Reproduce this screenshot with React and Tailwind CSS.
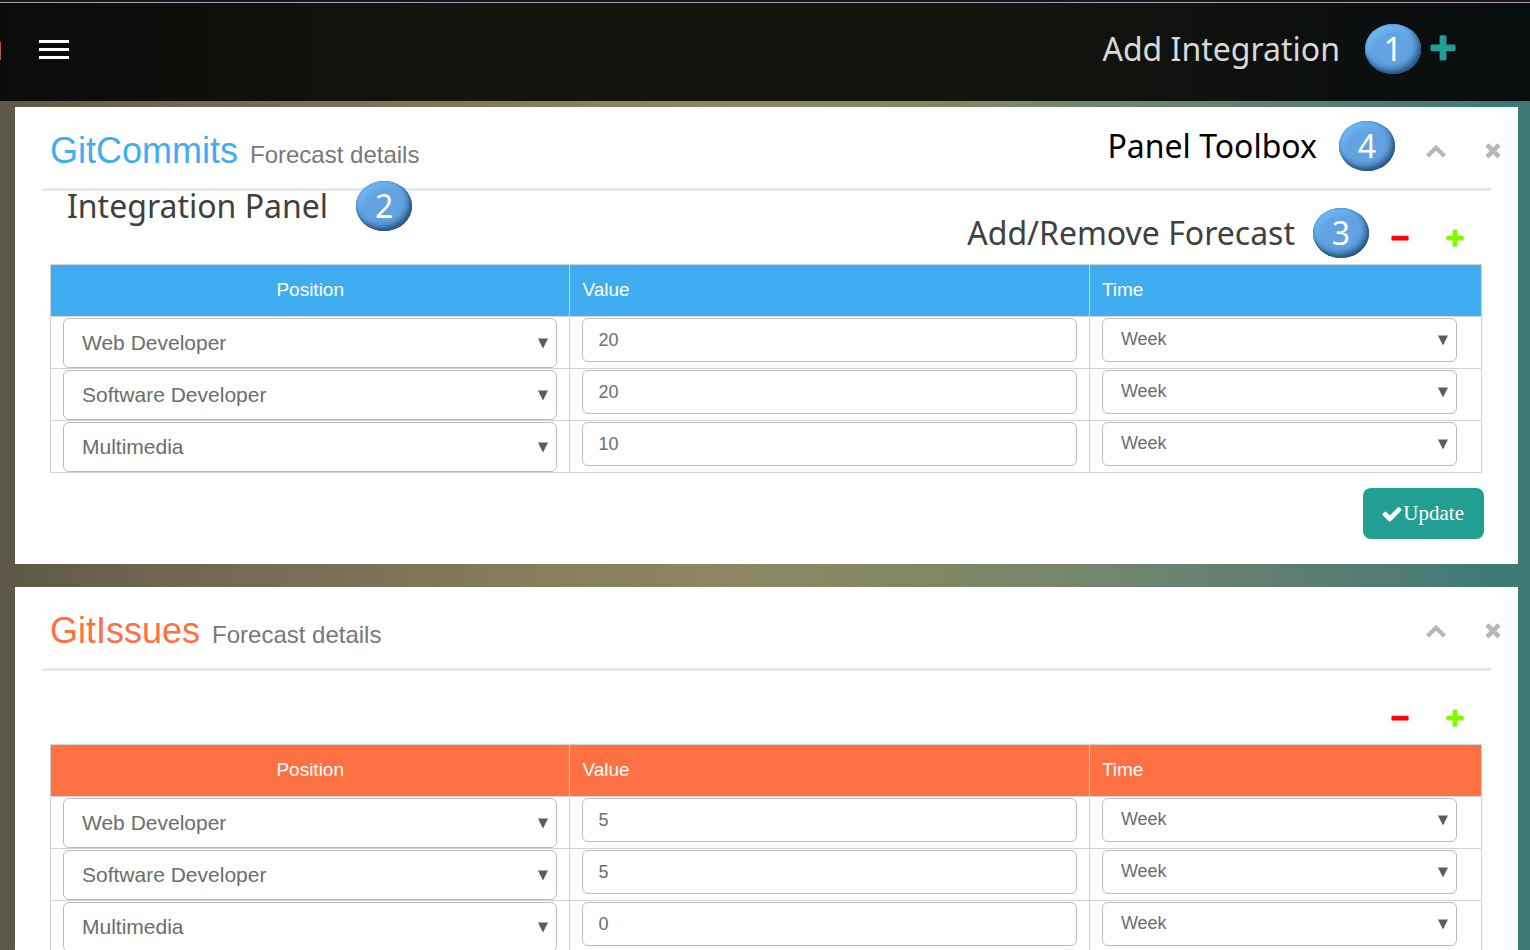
import React from "react";

const PLUS =
  "M1600 736v192q0 40-28 68t-68 28h-416v416q0 40-28 68t-68 28h-192q-40 0-68-28t-28-68v-416h-416q-40 0-68-28t-28-68v-192q0-40 28-68t68-28h416v-416q0-40 28-68t68-28h192q40 0 68 28t28 68v416h416q40 0 68 28t28 68z";
const MINUS =
  "M1600 736v192q0 40-28 68t-68 28h-1216q-40 0-68-28t-28-68v-192q0-40 28-68t68-28h1216q40 0 68 28t28 68z";
const CHECK =
  "M1671 566q0 40-28 68l-724 724-136 136q-28 28-68 28t-68-28l-136-136-362-362q-28-28-28-68t28-68l136-136q28-28 68-28t68 28l294 295 656-657q28-28 68-28t68 28l136 136q28 28 28 68z";
const TIMES =
  "M1490 1322q0 40-28 68l-136 136q-28 28-68 28t-68-28l-294-294-294 294q-28 28-68 28t-68-28l-136-136q-28-28-28-68t28-68l294-294-294-294q-28-28-28-68t28-68l136-136q28-28 68-28t68 28l294 294 294-294q28-28 68-28t68 28l136 136q28 28 28 68t-28 68l-294 294 294 294q28 28 28 68z";
const CHEVRON_UP =
  "M1683 1331l-166 165q-19 19-45 19t-45-19l-531-531-531 531q-19 19-45 19t-45-19l-166-165q-19-19-19-45.5t19-45.5l742-741q19-19 45-19t45 19l742 741q19 19 19 45.5t-19 45.5z";

function Icon({ d, className }) {
  return (
    <svg viewBox="0 0 1792 1792" fill="currentColor" aria-hidden="true" className={className}>
      <path d={d} />
    </svg>
  );
}

function Callout({ n, text, className }) {
  return (
    <div className={"pointer-events-none absolute flex items-center whitespace-nowrap font-['Noto_Sans',sans-serif] text-[32px] leading-[50px] " + className}>
      <span>{text}</span>
      <span className="flex h-[50px] w-14 items-center justify-center rounded-[50%] bg-[#62a3e0] text-white shadow-[inset_-3px_-4px_6px_#275482,inset_3px_5px_6px_#6fb8f8,inset_0_0_2px_1px_#28547e]">
        {n}
      </span>
    </div>
  );
}

function Select({ label, options, className }) {
  return (
    <div className="relative">
      <select
        aria-label={label}
        className={"block w-full appearance-none rounded-md border border-[#bbb] bg-white pr-8 text-[#6b6d70] " + className}
      >
        {options.map((o) => (
          <option key={o}>{o}</option>
        ))}
      </select>
      <svg viewBox="0 0 10 11" aria-hidden="true" className="pointer-events-none absolute top-1/2 right-[9px] h-[11px] w-2.5 -translate-y-1/2">
        <path d="M0 1h10L5 11z" fill="#5c5c5c" />
      </svg>
    </div>
  );
}

const POSITIONS = ["Web Developer", "Software Developer", "Multimedia"];

function Panel({ title, titleClass, headClass, values, toolbox, forecast, intro }) {
  const cell = "border border-[#d2d2d2] px-3 pt-px pb-0 align-top";
  const headCell = "border border-[#d2d2d2] px-3 font-normal";
  return (
    <section className="bg-white pb-[25px] text-[#77787b]">
      <header className="relative flex h-[81px] items-center justify-between pr-3.5 pl-[35px]">
        <h2 className="flex items-baseline gap-3 pt-1.5">
          <span className={"text-4xl " + titleClass}>{title}</span>
          <small className="text-2xl">Forecast details</small>
        </h2>
        <div className="flex items-center gap-[35px] pt-1 text-[#b8b8b8]">
          <button aria-label="Collapse panel"><Icon d={CHEVRON_UP} className="size-[22px]" /></button>
          <button aria-label="Close panel"><Icon d={TIMES} className="size-[22px]" /></button>
        </div>
        {toolbox}
      </header>
      <hr className="mx-[27px] border-0 border-t-[3px] border-[#e6e9ed]" />
      <div className="relative flex h-[73px] items-center justify-end gap-[33px] pt-[22px] pr-[52px]">
        {intro}
        {forecast}
        <button aria-label="Remove forecast" className="text-[#ff0000]"><Icon d={MINUS} className="size-[22px]" /></button>
        <button aria-label="Add forecast" className="text-[#7cfc00]"><Icon d={PLUS} className="size-[22px]" /></button>
      </div>
      <div className="pr-9 pl-[35px]">
        <table className="w-full table-fixed border-collapse">
          <colgroup>
            <col className="w-[36.3%]" />
            <col className="w-[36.3%]" />
            <col />
          </colgroup>
          <thead>
            <tr className={"h-[52px] text-left text-[19px] text-white " + headClass}>
              <th className={headCell + " text-center"}>Position</th>
              <th className={headCell}>Value</th>
              <th className={headCell}>Time</th>
            </tr>
          </thead>
          <tbody>
            {POSITIONS.map((p, i) => (
              <tr key={p} className="h-[52px]">
                <td className={cell}>
                  <Select label={title + " position " + (i + 1)} options={[p, ...POSITIONS.filter((x) => x !== p)]} className="h-[50px] pl-[18px] text-[21px]" />
                </td>
                <td className={cell}>
                  <input
                    aria-label={title + " value " + (i + 1)}
                    defaultValue={values[i]}
                    className="block h-11 w-full rounded-md border border-[#bbb] bg-white px-[15px] text-lg text-[#6b6d70]"
                  />
                </td>
                <td className={cell}>
                  <div className="pr-3">
                    <Select label={title + " time " + (i + 1)} options={["Week", "Month"]} className="h-11 pb-0.5 pl-[18px] text-lg" />
                  </div>
                </td>
              </tr>
            ))}
          </tbody>
        </table>
      </div>
      <div className="flex justify-end pt-[15px] pr-[34px]">
        <button className="flex h-[51px] items-center rounded-lg bg-[#229f92] pr-5 pl-[18px] font-['Liberation_Serif',serif] text-[21px] text-white">
          <Icon d={CHECK} className="size-[22px]" />
          Update
        </button>
      </div>
    </section>
  );
}

export default function App() {
  return (
    <div className="h-screen overflow-hidden bg-[linear-gradient(to_right,#5c5748_0%,#6e664f_10%,#7b7358_25%,#86835a_38%,#8b8762_48%,#858860_57%,#76866e_70%,#5f7e72_84%,#3f7b76_97%)] font-['Liberation_Sans',sans-serif]">
      <header className="relative flex h-[101px] items-center justify-between border-t-2 border-[#1a1420] bg-[linear-gradient(to_right,#0b0c0a,#13140e_30%,#13140e_65%,#080d0e)] pr-[71px] pb-[5px] pl-[39px] shadow-[inset_0_1px_0_#a8a4a8]">
        <span className="absolute top-10 left-0 h-[18px] w-px bg-[#a5682a]" />
        <button aria-label="Toggle menu" className="flex w-[30px] flex-col gap-[5px]">
          <span className="h-[3px] bg-white" />
          <span className="h-[3px] bg-white" />
          <span className="h-[3px] bg-white" />
        </button>
        <button aria-label="Add integration" className="text-[#229f92]"><Icon d={PLUS} className="size-8" /></button>
        <Callout n={1} text="Add Integration" className="top-[22px] right-[109px] gap-[25px] text-[#d9d9d9]" />
      </header>
      <main className="flex flex-col gap-[23px] pt-1.5 pr-3 pl-[15px]">
        <Panel
          title="GitCommits"
          titleClass="text-[#3fadf0]"
          headClass="bg-[#3fadf0]"
          values={[20, 20, 10]}
          toolbox={<Callout n={4} text="Panel Toolbox" className="top-[14px] right-[123px] gap-[22px] text-black" />}
          intro={<Callout n={2} text="Integration Panel" className="-top-2.5 left-[52px] gap-7 text-[#404040]" />}
          forecast={<Callout n={3} text="Add/Remove Forecast" className="top-[17px] right-[149px] gap-[18px] text-[#404040]" />}
        />
        <Panel title="GitIssues" titleClass="text-[#ff7043]" headClass="bg-[#ff7043]" values={[5, 5, 0]} />
      </main>
    </div>
  );
}
